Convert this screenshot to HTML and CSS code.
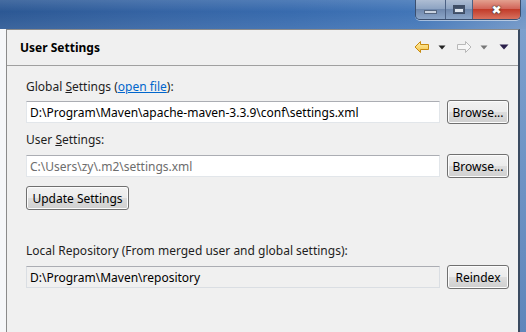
FILE: index.html
```html
<!DOCTYPE html>
<html>
	<head>
		<meta charset="UTF-8">
		<title>User Settings</title>
		<link rel="stylesheet" href="styles.css">
	</head>
	<body>
		<div class="window">
			<div class="titlebar">
				<div class="controls">
					<span class="ctl min"><i></i></span>
					<span class="ctl max"><i></i></span>
					<span class="ctl close">&#10006;</span>
				</div>
			</div>
			<div class="frame">
				<div class="gutter"></div>
				<div class="panel">
					<div class="panel-head">
						<h1>User Settings</h1>
						<div class="nav">
							<svg width="16" height="12" viewBox="0 0 16 12">
								<defs>
									<linearGradient id="yel" x1="0" y1="0" x2="0" y2="1">
										<stop offset="0" stop-color="#fff3b0"/>
										<stop offset="1" stop-color="#f5c040"/>
									</linearGradient>
								</defs>
								<path d="M1 6 L6.5 0.5 L6.5 3.5 L14.5 3.5 L14.5 8.5 L6.5 8.5 L6.5 11.5 Z" fill="url(#yel)" stroke="#c88a10" stroke-linejoin="round"/>
							</svg>
							<svg class="tri" width="8" height="5" viewBox="0 0 8 5"><path d="M0.5 0.5 H7.5 L4 4.5 Z" fill="#222"/></svg>
							<svg class="fwd" width="16" height="12" viewBox="0 0 16 12">
								<path d="M15 6 L9.5 0.5 L9.5 3.5 L1.5 3.5 L1.5 8.5 L9.5 8.5 L9.5 11.5 Z" fill="#f6f6f6" stroke="#b8b8b8" stroke-linejoin="round"/>
							</svg>
							<svg class="tri" width="8" height="5" viewBox="0 0 8 5"><path d="M0.5 0.5 H7.5 L4 4.5 Z" fill="#777"/></svg>
							<svg class="menu" width="10" height="6" viewBox="0 0 10 6"><path d="M0.5 0.5 H9.5 L5 5.5 Z" fill="#2a1f4a"/></svg>
						</div>
					</div>
					<div class="panel-body">
						<div class="lbl">Global <u>S</u>ettings (<a href="#">open file</a>):</div>
						<div class="row">
							<div class="field">D:\Program\Maven\apache-maven-3.3.9\conf\settings.xml</div>
							<button class="btn">Browse...</button>
						</div>
						<div class="lbl second">User <u>S</u>ettings:</div>
						<div class="row">
							<div class="field hint">C:\Users\zy\.m2\settings.xml</div>
							<button class="btn">Browse...</button>
						</div>
						<button class="btn update">Update Settings</button>
						<div class="lbl third">Local Repository (From merged user and global settings):</div>
						<div class="row">
							<div class="field readonly">D:\Program\Maven\repository</div>
							<button class="btn">Reindex</button>
						</div>
					</div>
				</div>
				<div class="edge"></div>
			</div>
		</div>
	</body>
</html>
```

FILE: styles.css
```css
* {
	margin: 0;
	padding: 0;
	box-sizing: border-box;
}

html,
body {
	width: 526px;
	height: 332px;
	overflow: hidden;
	background: #f0f0f0;
}

body {
	font-family: "Noto Sans", "Open Sans", sans-serif;
	font-size: 12px;
	color: #000;
}

.window {
	display: flex;
	flex-direction: column;
	height: 332px;
}

.titlebar {
	height: 29px;
	flex: none;
	display: flex;
	justify-content: flex-end;
	padding-right: 5px;
	background:
		linear-gradient(to bottom, rgba(255, 255, 255, 0.12), rgba(255, 255, 255, 0) 40%, rgba(255, 255, 255, 0.08)),
		linear-gradient(to right, #2c5894, #3564a4 30%, #386bae 55%, #4276b8 80%, #6f95c6);
}

.controls {
	display: flex;
	height: 20px;
	border: 1px solid #3b4f6e;
	border-top: none;
	border-radius: 0 0 5px 5px;
	overflow: hidden;
	box-shadow: 0 1px 0 rgba(255, 255, 255, 0.5);
}

.ctl {
	display: flex;
	align-items: center;
	justify-content: center;
	height: 19px;
	background: linear-gradient(to bottom, #aebdd3, #8ea4c3 45%, #6f88ad 50%, #8ca6c8);
	border-right: 1px solid #4c6184;
}

.min {
	width: 30px;
}

.min i {
	display: block;
	width: 13px;
	height: 4px;
	margin-top: 5px;
	background: #c9d3e0;
	border: 1px solid #55667f;
}

.max {
	width: 27px;
}

.max i {
	display: block;
	width: 12px;
	height: 9px;
	border: 1px solid #3f4e66;
	border-top-width: 3px;
	background: #dfe6ef;
	box-shadow: inset 0 0 0 1px #4a5a72;
}

.close {
	width: 47px;
	border-right: none;
	color: #fff;
	font-size: 12px;
	font-family: "DejaVu Sans", sans-serif;
	text-shadow: 0 0 1px #333, 0 0 2px #333;
	background: linear-gradient(to bottom, #e3a08f, #d2665a 45%, #c23c2a 50%, #d8715e);
}

.frame {
	flex: 1;
	display: flex;
}

.gutter {
	width: 6px;
	background: #f6f7f9;
}

.edge {
	width: 6px;
	background: linear-gradient(to bottom, #7c9fcd, #5f86bb);
}

.panel {
	flex: 1;
	display: flex;
	flex-direction: column;
	border: 1px solid #8b8b8b;
	border-bottom: none;
	border-right: 2px solid #3a4a60;
	background: #f0f0f0;
}

.panel-head {
	height: 36px;
	display: flex;
	align-items: center;
	padding-left: 13px;
	padding-right: 9px;
	border-bottom: 1px solid #a0a0a0;
}

.panel-head h1 {
	flex: 1;
	font-size: 12px;
	font-weight: bold;
	color: #000;
}

.nav {
	display: flex;
	align-items: center;
	margin-top: -1px;
}

.nav .tri {
	margin-left: 8px;
}

.nav .fwd {
	margin-left: 10px;
}

.nav .menu {
	margin-left: 11px;
}

.panel-body {
	display: flex;
	flex-direction: column;
	align-items: flex-start;
	padding: 13px 9px 0 19px;
}

.lbl {
	height: 16px;
	line-height: 16px;
	margin-bottom: 5px;
	color: #1e1e1e;
}

.lbl a {
	color: #0066cc;
}

.second {
	margin-top: 8px;
	margin-bottom: 6px;
}

.third {
	margin-top: 33px;
	margin-bottom: 6px;
}

.row {
	display: flex;
	align-items: center;
	gap: 7px;
	width: 100%;
	height: 24px;
}

.field {
	flex: 1;
	height: 22px;
	line-height: 21px;
	padding-left: 3px;
	background: #fff;
	border: 1px solid #e2e6ea;
	border-top-color: #abadb3;
	white-space: nowrap;
	overflow: hidden;
}

.hint {
	color: #6d6d6d;
}

.readonly {
	background: #f0f0f0;
	border-color: #dadee3;
	border-top-color: #abadb3;
}

.btn {
	width: 62px;
	height: 24px;
	font-family: inherit;
	font-size: 12px;
	color: #000;
	border: 1px solid #707070;
	border-radius: 3px;
	background: linear-gradient(to bottom, #f2f2f2, #ebebeb 50%, #dddddd 51%, #cfcfcf);
	box-shadow: inset 0 0 0 1px #fcfcfc;
}

.update {
	width: 103px;
	margin-top: 8px;
}
```
